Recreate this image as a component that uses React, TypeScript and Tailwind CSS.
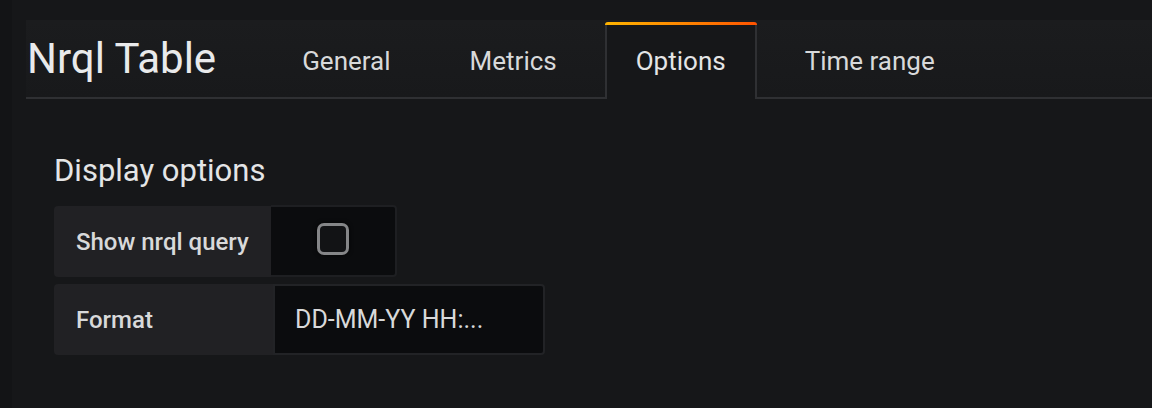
const TABS = ["General", "Metrics", "Options", "Time range"];
const ACTIVE = "Options";

function Tab({ label, active }: { label: string; active: boolean }) {
	if (active) {
		return (
			<div className="relative -mb-[2px] flex h-[77px] items-center rounded-t-[3px] border-x-2 border-[#2f3033] bg-[#161719] px-[29px] pt-[2px] text-[26px] text-[#e4e5e6]">
				<div className="absolute -left-[2px] -right-[2px] top-0 h-[3px] rounded-t-[3px] bg-gradient-to-r from-[#ffb400] to-[#ff5200]" />
				{label}
			</div>
		);
	}
	return (
		<div className="flex h-[77px] items-center px-[31px] pt-[5px] text-[26px] text-[#d8d9da]">
			{label}
		</div>
	);
}

export default function App() {
	return (
		<div
			className="flex h-[408px] w-[1152px] overflow-hidden bg-[#161719]"
			style={{ fontFamily: "Roboto, 'Noto Sans', sans-serif" }}
		>
			{/* left shade */}
			<div className="w-[12px] shrink-0 bg-[#131416]" />
			<div className="flex flex-1 flex-col pl-[14px] pt-[20px]">
				{/* Header */}
				<header className="flex h-[79px] items-end border-b-2 border-[#2f3033] bg-gradient-to-b from-[#1b1c1e] to-[#18191b]">
					<h1 className="mr-[55px] self-center pl-[1px] text-[42px] leading-none text-[#e9eaeb]">
						Nrql Table
					</h1>
					<div className="flex items-end gap-[17px]">
						{TABS.map((t) => (
							<Tab key={t} label={t} active={t === ACTIVE} />
						))}
					</div>
				</header>

				{/* Options */}
				<main className="flex flex-col pl-[28px] pt-[54px]">
					<h2 className="text-[31px] leading-[36px] text-[#e4e5e6]">
						Display options
					</h2>
					<div className="mt-[17px] flex flex-col gap-[7px]">
						<div className="flex h-[71px]">
							<div className="flex w-[217px] items-center rounded-l-[4px] bg-[#212124] pl-[22px] text-[24px] font-medium text-[#d8d9da]">
								Show nrql query
							</div>
							<div className="-mt-[1px] flex h-[72px] w-[126px] items-center justify-center rounded-r-[4px] border-2 border-l-0 border-[#1e1f22] bg-[#0b0c0e] pb-[5px]">
								<div className="h-[32px] w-[32px] rounded-[7px] border-[3px] border-[#858688] bg-[#121315] shadow-[0_0_4px_rgba(0,0,0,0.8)]" />
							</div>
						</div>
						<div className="flex h-[71px]">
							<div className="flex w-[219px] items-center rounded-l-[4px] bg-[#212124] pl-[22px] text-[24px] font-medium text-[#d8d9da]">
								Format
							</div>
							<div className="flex w-[272px] items-center rounded-r-[4px] border-2 border-[#222326] bg-[#0b0c0e] pl-[20px] text-[25px] text-[#d8d9da]">
								DD-MM-YY HH:...
							</div>
						</div>
					</div>
				</main>
			</div>
		</div>
	);
}
